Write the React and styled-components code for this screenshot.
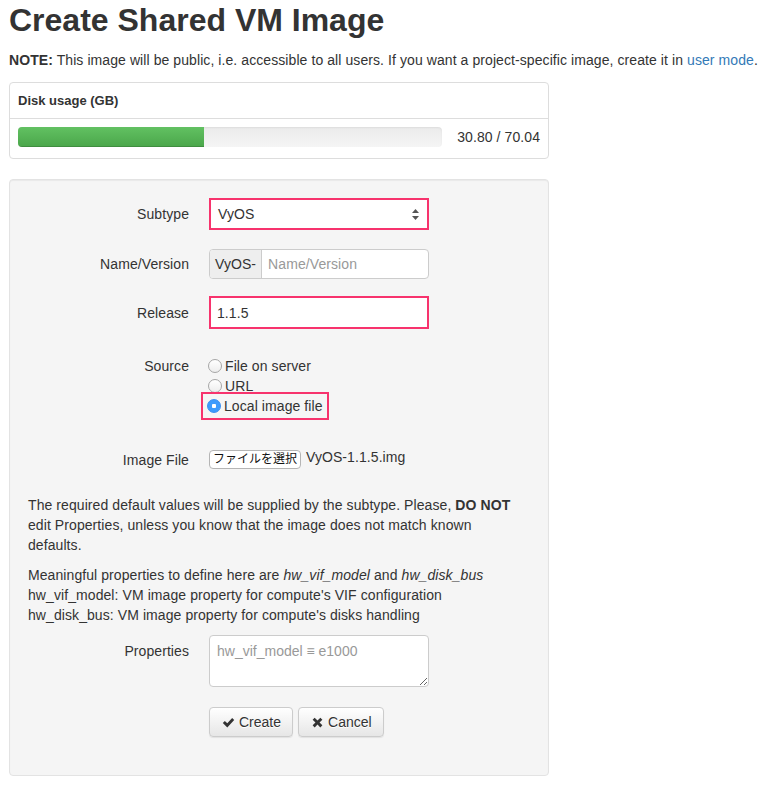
import styled, { createGlobalStyle } from "styled-components";

const GlobalStyle = createGlobalStyle`
  body {
    margin: 0;
    background: #ffffff;
    color: #333333;
    font-family: "Liberation Sans", Arial, sans-serif;
    font-size: 14px;
    line-height: 20px;
    letter-spacing: 0.08px;
  }
`;

const Page = styled.div`
  padding: 0 9px;
`;

const Title = styled.h1`
  margin: 3px 0 12px;
  font-size: 32px;
  line-height: 1.1;
  font-weight: bold;
  letter-spacing: 0;
  color: #333333;
`;

const Note = styled.p`
  margin: 0 0 12px;
  white-space: nowrap;
`;

const Link = styled.a`
  color: #337ab7;
  text-decoration: none;
`;

const Panel = styled.div`
  width: 540px;
  box-sizing: border-box;
  border: 1px solid #dddddd;
  border-radius: 4px;
  margin-bottom: 20px;
`;

const PanelHeading = styled.div`
  height: 35px;
  display: flex;
  align-items: center;
  padding: 0 8px;
  border-bottom: 1px solid #dddddd;
  font-size: 13px;
  font-weight: bold;
  letter-spacing: 0;
`;

const PanelBody = styled.div`
  display: grid;
  grid-template-columns: 1fr 98px;
  align-items: center;
  padding: 8px 8px 11px;
`;

const Track = styled.div`
  height: 20px;
  border-radius: 4px;
  background: linear-gradient(#ebebeb, #f5f5f5);
  box-shadow: inset 0 1px 2px rgba(0, 0, 0, 0.06);
  overflow: hidden;
`;

const Fill = styled.div`
  height: 100%;
  background: linear-gradient(#62c162, #4aa64a);
  box-shadow: inset 0 -1px 0 rgba(0, 0, 0, 0.15);
`;

const Usage = styled.div`
  text-align: right;
  font-size: 14px;
`;

const Well = styled.div`
  width: 540px;
  box-sizing: border-box;
  background: #f5f5f5;
  border: 1px solid #e3e3e3;
  border-radius: 4px;
  padding: 18px 18px 38px;
  box-shadow: inset 0 1px 1px rgba(0, 0, 0, 0.05);
`;

const Row = styled.div`
  display: grid;
  grid-template-columns: 161px 220px;
  column-gap: 20px;
  align-items: ${(p) => p.$align || "center"};
  margin-bottom: ${(p) => p.$gap || 0}px;
`;

const Label = styled.div`
  text-align: right;
  padding-top: ${(p) => p.$top || 0}px;
`;

const Select = styled.div`
  height: 32px;
  box-sizing: border-box;
  border: 2px solid ${(p) => (p.$marked ? "#f7336d" : "#cccccc")};
  background: #ffffff;
  display: flex;
  align-items: center;
  justify-content: space-between;
  padding: 0 8px 0 7px;
`;

const Arrows = styled.svg`
  width: 7px;
  height: 11px;
`;

const Group = styled.div`
  height: 30px;
  box-sizing: border-box;
  display: flex;
  border: 1px solid #cccccc;
  border-radius: 4px;
  overflow: hidden;
  background: #ffffff;
`;

const Addon = styled.span`
  display: flex;
  align-items: center;
  padding: 0 5px;
  background: #eeeeee;
  border-right: 1px solid #cccccc;
`;

const Placeholder = styled.span`
  display: flex;
  align-items: center;
  padding: 0 6px;
  color: #999999;
`;

const Field = styled.div`
  height: 33px;
  box-sizing: border-box;
  border: 2px solid #f7336d;
  background: #ffffff;
  display: flex;
  align-items: center;
  padding: 0 6px;
`;

const RadioList = styled.div`
  display: flex;
  flex-direction: column;
  align-items: flex-start;
  margin-left: -1px;
`;

const RadioItem = styled.div`
  display: flex;
  align-items: center;
  gap: 3px;
  height: 20px;
  ${(p) =>
    p.$marked &&
    `
    border: 2px solid #f7336d;
    padding: 2px 4px;
    margin: -4px 0 0 -7px;
  `}
`;

const Dot = styled.span`
  width: 14px;
  height: 14px;
  box-sizing: border-box;
  border-radius: 50%;
  border: 1px solid ${(p) => (p.$on ? "#3a8ef0" : "#a6a6a6")};
  background: ${(p) =>
    p.$on
      ? "radial-gradient(circle, #ffffff 0 2px, #3d9bfc 2.5px)"
      : "linear-gradient(#ffffff, #ededed)"};
`;

const FileControl = styled.div`
  display: flex;
  align-items: flex-start;
  gap: 5px;
`;

const FileButton = styled.span`
  height: 19px;
  box-sizing: border-box;
  width: 92px;
  border: 1px solid #b5b5b5;
  border-radius: 4px;
  background: #ffffff;
  font-family: "Liberation Sans", "Noto Sans CJK JP", sans-serif;
  font-size: 12px;
  line-height: 17px;
  letter-spacing: 0;
  text-align: center;
  color: #111111;
`;

const FileName = styled.span`
  line-height: 14px;
`;

const Help = styled.p`
  margin: 0 0 10px;
  max-width: 490px;
`;

const TextArea = styled.textarea`
  height: 52px;
  box-sizing: border-box;
  width: 220px;
  margin: 0;
  border: 1px solid #cccccc;
  border-radius: 4px;
  padding: 5px 7px;
  font-family: "Liberation Sans", Arial, sans-serif;
  font-size: 14px;
  line-height: 20px;
  resize: vertical;
  &::placeholder {
    color: #999999;
  }
`;

const Actions = styled.div`
  display: flex;
  gap: 5px;
  padding-left: 181px;
`;

const Button = styled.button`
  height: 30px;
  display: flex;
  align-items: center;
  gap: 4px;
  padding: 0 11px 0 12px;
  border: 1px solid #cccccc;
  border-radius: 4px;
  background: linear-gradient(#ffffff, #e6e6e6);
  box-shadow: 0 1px 1px rgba(0, 0, 0, 0.08);
  font-family: "Liberation Sans", Arial, sans-serif;
  font-size: 14px;
  color: #333333;
  text-shadow: 0 1px 0 #ffffff;
`;

const Icon = styled.svg`
  width: 13px;
  height: 13px;
`;

function App() {
  const used = 30.8;
  const total = 70.04;

  return (
    <Page>
      <GlobalStyle />
      <Title>Create Shared VM Image</Title>
      <Note>
        <b>NOTE:</b> This image will be public, i.e. accessible to all users. If you want a
        project-specific image, create it in <Link href="#">user mode</Link>.
      </Note>

      <Panel>
        <PanelHeading>Disk usage (GB)</PanelHeading>
        <PanelBody>
          <Track>
            <Fill style={{ width: `${(used / total) * 100}%` }} />
          </Track>
          <Usage>30.80 / 70.04</Usage>
        </PanelBody>
      </Panel>

      <Well>
        <Row $gap={19}>
          <Label>Subtype</Label>
          <Select $marked>
            <span>VyOS</span>
            <Arrows viewBox="0 0 7 11">
              <path d="M3.5 0 L7 4 H0 Z M3.5 11 L7 7 H0 Z" fill="#555" />
            </Arrows>
          </Select>
        </Row>

        <Row $gap={17}>
          <Label>Name/Version</Label>
          <Group>
            <Addon>VyOS-</Addon>
            <Placeholder>Name/Version</Placeholder>
          </Group>
        </Row>

        <Row $gap={27}>
          <Label>Release</Label>
          <Field>1.1.5</Field>
        </Row>

        <Row $align="start" $gap={30}>
          <Label>Source</Label>
          <RadioList>
            <RadioItem>
              <Dot />
              File on server
            </RadioItem>
            <RadioItem>
              <Dot />
              URL
            </RadioItem>
            <RadioItem $marked>
              <Dot $on />
              Local image file
            </RadioItem>
          </RadioList>
        </Row>

        <Row $align="start" $gap={25}>
          <Label>Image File</Label>
          <FileControl>
            <FileButton>ファイルを選択</FileButton>
            <FileName>VyOS-1.1.5.img</FileName>
          </FileControl>
        </Row>

        <Help>
          The required default values will be supplied by the subtype. Please, <b>DO NOT</b> edit
          Properties, unless you know that the image does not match known defaults.
        </Help>
        <Help>
          Meaningful properties to define here are <i>hw_vif_model</i> and <i>hw_disk_bus</i>
          <br />
          hw_vif_model: VM image property for compute's VIF configuration
          <br />
          hw_disk_bus: VM image property for compute's disks handling
        </Help>

        <Row $align="start" $gap={20}>
          <Label $top={6}>Properties</Label>
          <TextArea placeholder="hw_vif_model ≡ e1000" />
        </Row>

        <Actions>
          <Button>
            <Icon viewBox="0 0 16 16">
              <path d="M1 8.5 L3.5 6 L6.5 9 L12.5 2.5 L15 5 L6.5 14 Z" fill="#333" />
            </Icon>
            Create
          </Button>
          <Button>
            <Icon viewBox="0 0 16 16">
              <path
                d="M2 4.5 L4.5 2 L8 5.5 L11.5 2 L14 4.5 L10.5 8 L14 11.5 L11.5 14 L8 10.5 L4.5 14 L2 11.5 L5.5 8 Z"
                fill="#333"
              />
            </Icon>
            Cancel
          </Button>
        </Actions>
      </Well>
    </Page>
  );
}

export default App;
